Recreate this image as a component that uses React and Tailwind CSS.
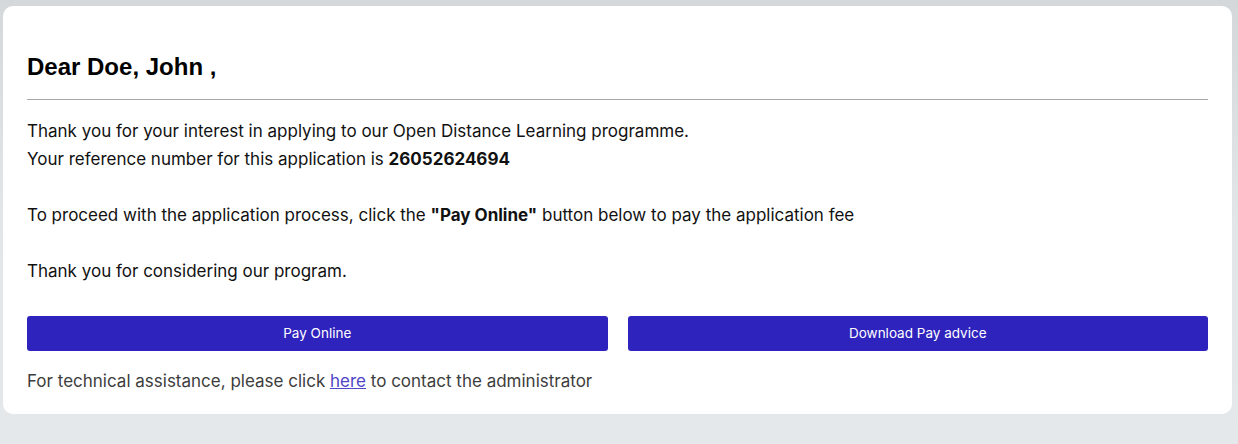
export default function App() {
  return (
    <div className="w-[1238px] h-[444px] bg-gradient-to-b from-[#d4d8db] via-[#e2e6e9] to-[#e4e8eb] pt-[6px] pl-[3px] pr-[6px] font-['Inter',sans-serif]">
      <div className="bg-white rounded-[10px] px-6 pt-[47px] pb-[19px]">
        <h2 className="font-['Liberation_Sans',Arial,sans-serif] font-bold text-[24px] leading-[28px] text-black">Dear Doe, John ,</h2>
        <div className="mt-[18px] mb-[17px] h-px bg-[#a8a8a8]" />
        <div className="text-[17px] leading-[28px] text-[#111]">
          Thank you for your interest in applying to our Open Distance Learning programme.
          <br />
          Your reference number for this application is <b className="font-bold">26052624694</b>
          <br />
          <br />
          To proceed with the application process, click the <b className="font-bold">"Pay Online"</b> button below to pay the application fee
          <br />
          <br />
          Thank you for considering our program.
        </div>
        <div className="mt-[31px] grid grid-cols-2 gap-5">
          <button className="h-[35px] rounded-[3px] bg-[#2f23bd] text-white text-[13.5px]">Pay Online</button>
          <button className="h-[35px] rounded-[3px] bg-[#2f23bd] text-white text-[13.5px]">Download Pay advice</button>
        </div>
        <p className="mt-[16px] text-[17px] leading-[28px] text-[#3d3d3d]">
          For technical assistance, please click <a href="#" className="text-[#4f46c8] underline">here</a> to contact the administrator
        </p>
      </div>
    </div>
  );
}
